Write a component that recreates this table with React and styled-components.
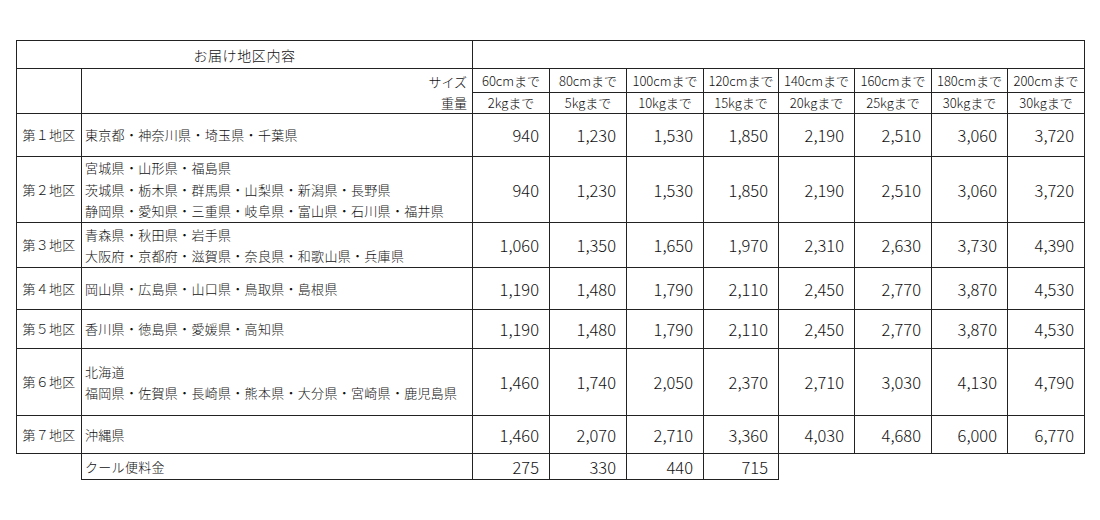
import React from 'react';
import styled, { createGlobalStyle } from 'styled-components';

const GlobalStyle = createGlobalStyle`
  body {
    margin: 0;
    background: #fff;
    font-family: "Noto Sans CJK JP", "Noto Sans", sans-serif;
    color: #111;
  }
`;

const columnWidths = [65, 391, 77, 77, 77, 75, 76, 77, 76, 77];

const sizes = ['60cm', '80cm', '100cm', '120cm', '140cm', '160cm', '180cm', '200cm'];
const weights = ['2kg', '5kg', '10kg', '15kg', '20kg', '25kg', '30kg', '30kg'];

const zones = [
  {
    name: '第１地区',
    height: 43,
    areas: ['東京都・神奈川県・埼玉県・千葉県'],
    prices: [940, 1230, 1530, 1850, 2190, 2510, 3060, 3720],
  },
  {
    name: '第２地区',
    height: 66,
    areas: [
      '宮城県・山形県・福島県',
      '茨城県・栃木県・群馬県・山梨県・新潟県・長野県',
      '静岡県・愛知県・三重県・岐阜県・富山県・石川県・福井県',
    ],
    prices: [940, 1230, 1530, 1850, 2190, 2510, 3060, 3720],
  },
  {
    name: '第３地区',
    height: 45,
    areas: ['青森県・秋田県・岩手県', '大阪府・京都府・滋賀県・奈良県・和歌山県・兵庫県'],
    prices: [1060, 1350, 1650, 1970, 2310, 2630, 3730, 4390],
  },
  {
    name: '第４地区',
    height: 42,
    areas: ['岡山県・広島県・山口県・鳥取県・島根県'],
    prices: [1190, 1480, 1790, 2110, 2450, 2770, 3870, 4530],
  },
  {
    name: '第５地区',
    height: 39,
    areas: ['香川県・徳島県・愛媛県・高知県'],
    prices: [1190, 1480, 1790, 2110, 2450, 2770, 3870, 4530],
  },
  {
    name: '第６地区',
    height: 67,
    areas: ['北海道', '福岡県・佐賀県・長崎県・熊本県・大分県・宮崎県・鹿児島県'],
    prices: [1460, 1740, 2050, 2370, 2710, 3030, 4130, 4790],
  },
  {
    name: '第７地区',
    height: 38,
    areas: ['沖縄県'],
    prices: [1460, 2070, 2710, 3360, 4030, 4680, 6000, 6770],
  },
];

const coolPrices = [275, 330, 440, 715];

const fmt = (n) => n.toLocaleString('en-US');

const Page = styled.div`
  padding: 40px 0 0 16px;
`;

const Table = styled.table`
  border-collapse: collapse;
  table-layout: fixed;
  width: 1069px;
`;

const Row = styled.tr`
  height: ${(p) => p.$h}px;
`;

const Cell = styled.td`
  border: 1px solid #222;
  padding: 0;
  font-size: 13px;
  font-weight: 300;
  line-height: 18px;
  vertical-align: middle;
  white-space: nowrap;
  overflow: hidden;
`;

const TitleCell = styled(Cell)`
  text-align: center;
  font-size: 14px;
  letter-spacing: 0.6px;
`;

const ZoneCell = styled(Cell)`
  text-align: center;
  letter-spacing: 0.2px;
`;

const AreaCell = styled(Cell)`
  padding-left: 3px;
  line-height: 21.5px;
  letter-spacing: 0.3px;
`;

const LabelCell = styled(Cell)`
  text-align: right;
  padding-right: 5px;
`;

const LabelLine = styled.div`
  height: ${(p) => p.$h}px;
  line-height: ${(p) => p.$h}px;
`;

const HeadCell = styled(Cell)`
  text-align: center;
  font-size: 13px;
`;

const PriceCell = styled(Cell)`
  text-align: right;
  padding-right: 10px;
  font-size: 16.5px;
`;

const EmptyCell = styled.td`
  border: none;
  padding: 0;
`;

export default function App() {
  return (
    <Page>
      <GlobalStyle />
      <Table>
        <colgroup>
          {columnWidths.map((w, i) => (
            <col key={i} style={{ width: w }} />
          ))}
        </colgroup>
        <tbody>
          <Row $h={28}>
            <TitleCell colSpan={2}>お届け地区内容</TitleCell>
            <Cell colSpan={8} />
          </Row>
          <Row $h={24}>
            <Cell rowSpan={2} />
            <LabelCell rowSpan={2}>
              <LabelLine $h={23}>サイズ</LabelLine>
              <LabelLine $h={20}>重量</LabelLine>
            </LabelCell>
            {sizes.map((s, i) => (
              <HeadCell key={i}>{s}まで</HeadCell>
            ))}
          </Row>
          <Row $h={21}>
            {weights.map((w, i) => (
              <HeadCell key={i}>{w}まで</HeadCell>
            ))}
          </Row>
          {zones.map((z) => (
            <Row key={z.name} $h={z.height}>
              <ZoneCell>{z.name}</ZoneCell>
              <AreaCell>
                {z.areas.map((a) => (
                  <div key={a}>{a}</div>
                ))}
              </AreaCell>
              {z.prices.map((p, i) => (
                <PriceCell key={i}>{fmt(p)}</PriceCell>
              ))}
            </Row>
          ))}
          <Row $h={26}>
            <EmptyCell />
            <AreaCell>クール便料金</AreaCell>
            {coolPrices.map((p, i) => (
              <PriceCell key={i}>{fmt(p)}</PriceCell>
            ))}
            <EmptyCell colSpan={4} />
          </Row>
        </tbody>
      </Table>
    </Page>
  );
}
